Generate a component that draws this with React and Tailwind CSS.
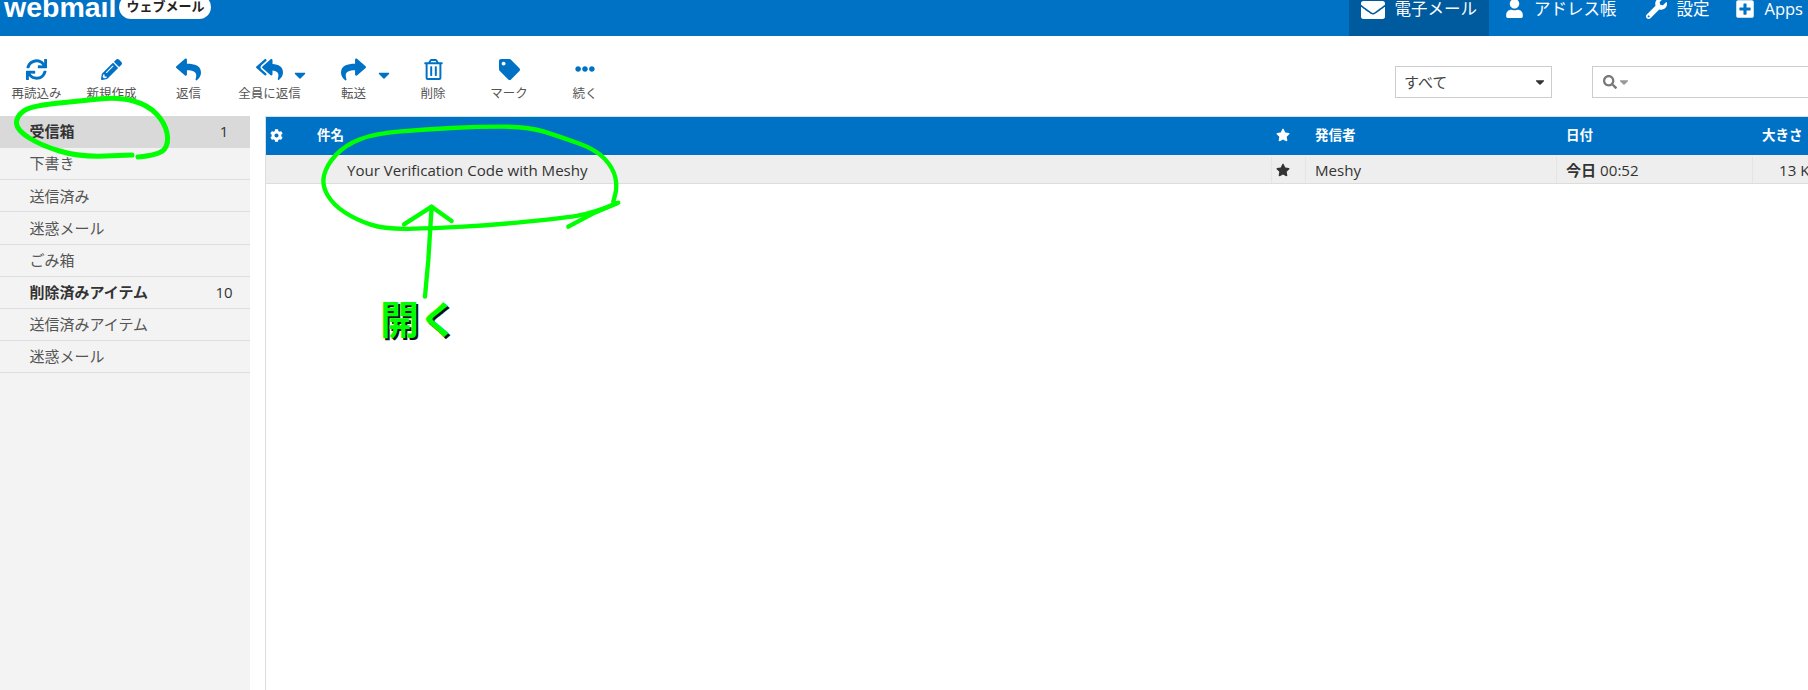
import {
  FaSync, FaPencilAlt, FaReply, FaReplyAll, FaShare, FaRegTrashAlt, FaTag, FaEllipsisH,
  FaEnvelope, FaUser, FaWrench, FaPlusSquare, FaCog, FaStar, FaSearch, FaCaretDown,
} from 'react-icons/fa';

const font = "font-['Open_Sans','Noto_Sans_CJK_JP',sans-serif]";

const tools = [
  { label: '再読込み', icon: <FaSync size={21} />, w: 'w-[73px]' },
  { label: '新規作成', icon: <FaPencilAlt size={21} />, w: 'w-[77px]' },
  { label: '返信', icon: <FaReply size={25} />, w: 'w-[77px]' },
  { label: '全員に返信', icon: <FaReplyAll size={27} />, w: 'w-[85px]', caret: true },
  { label: '転送', icon: <FaShare size={25} />, w: 'w-[83px]', caret: true },
  { label: '削除', icon: <FaRegTrashAlt size={21} />, w: 'w-[76px]' },
  { label: 'マーク', icon: <FaTag size={21} />, w: 'w-[76px]' },
  { label: '続く', icon: <FaEllipsisH size={20} />, w: 'w-[76px]' },
];

const folders = [
  { name: '受信箱', count: '1', bold: true, active: true },
  { name: '下書き' },
  { name: '送信済み' },
  { name: '迷惑メール' },
  { name: 'ごみ箱' },
  { name: '削除済みアイテム', count: '10', bold: true },
  { name: '送信済みアイテム' },
  { name: '迷惑メール' },
];

// turns hand-drawn points into a smooth stroke
function smooth(pts) {
  let d = `M${pts[0][0]} ${pts[0][1]}`;
  for (let i = 1; i < pts.length - 1; i++) {
    const mx = (pts[i][0] + pts[i + 1][0]) / 2;
    const my = (pts[i][1] + pts[i + 1][1]) / 2;
    d += ` Q${pts[i][0]} ${pts[i][1]} ${mx} ${my}`;
  }
  const last = pts[pts.length - 1];
  return d + ` L${last[0]} ${last[1]}`;
}

function Annotations() {
  const green = { fill: 'none', stroke: '#00ff00', strokeLinecap: 'round', strokeLinejoin: 'round' };
  return (
    <svg className="absolute left-0 top-0 pointer-events-none" width="1808" height="690">
      <g {...green} strokeWidth="5">
        <path d={smooth([[138, 157], [160, 155], [169, 143], [165, 123], [148, 105], [119, 97], [79, 101], [30, 106], [16, 117], [17, 130], [40, 145], [79, 157], [132, 155]])} />
      </g>
      <g transform="translate(260 110) scale(0.3333)" {...green} strokeWidth="13">
        <path d={smooth([[1070, 280], [1000, 310], [900, 325], [700, 345], [520, 355], [375, 358], [290, 330], [220, 285], [185, 225], [200, 165], [255, 105], [345, 70], [500, 58], [650, 50], [805, 50], [900, 80], [1010, 120], [1060, 175], [1072, 230], [1060, 275]])} />
        <path d="M925 350 L1000 310 L1075 278" />
        <path d="M495 560 L505 450 L515 290" />
        <path d="M432 343 L515 290 L575 333" />
      </g>
    </svg>
  );
}

function NavItem({ icon, label, active, className }) {
  return (
    <div className={`flex h-9 items-start gap-2.5 pt-px text-[16.5px] leading-4 text-white ${active ? 'bg-[#005a9e] px-3' : ''} ${className || ''}`}>
      {icon}
      <span>{label}</span>
    </div>
  );
}

export default function App() {
  return (
    <div className={`relative h-[690px] w-[1808px] overflow-hidden bg-white text-[#333] ${font}`}>
      <header className="flex h-9 items-start overflow-hidden bg-[#0072c6]">
        <div className="ml-1 flex items-start">
          <span className="-mt-[7px] font-['Liberation_Sans',sans-serif] text-[28.5px] font-bold leading-7 text-white">webmail</span>
          <span className="-mt-[5px] ml-[3px] flex h-6 w-[92px] items-center justify-center rounded-full bg-white text-[13px] font-bold text-[#222]">ウェブメール</span>
        </div>
        <div className="ml-auto flex items-start">
          <NavItem active icon={<FaEnvelope size={24} className="-mt-[3px]" />} label="電子メール" />
          <NavItem className="ml-[16px]" icon={<FaUser size={19} className="-mt-[2px]" />} label="アドレス帳" />
          <NavItem className="ml-[29px]" icon={<FaWrench size={21} className="-mt-[3px]" />} label="設定" />
          <NavItem className="ml-[25px] mr-[5px]" icon={<FaPlusSquare size={20} className="-mt-[2px]" />} label="Apps" />
        </div>
      </header>

      <div className="flex h-20 items-start">
        <div className="flex pt-[21px]">
          {tools.map((t) => (
            <div key={t.label} className={`relative flex flex-col items-center ${t.w}`}>
              <div className="flex h-[24px] items-center text-[#0072c6]">{t.icon}</div>
              <span className="mt-[5px] text-[12.5px] leading-4 text-[#555]">{t.label}</span>
              {t.caret && <FaCaretDown size={18} className="absolute left-1/2 top-[9px] ml-[21px] text-[#0072c6]" />}
            </div>
          ))}
        </div>
        <div className="ml-auto mt-[30px] flex items-start">
          <div className="flex h-8 w-[157px] items-center justify-between border border-[#ccc] pl-2 pr-1 text-[15px] text-[#444]">
            <span>すべて</span>
            <FaCaretDown size={14} className="text-[#333]" />
          </div>
          <div className="ml-10 flex h-8 w-[216px] items-center border border-r-0 border-[#ccc] pl-[10px] text-[#777]">
            <FaSearch size={14} />
            <FaCaretDown size={14} className="text-[#999]" />
          </div>
        </div>
      </div>

      <div className="flex h-[574px]">
        <aside className="w-[250px] shrink-0 bg-[#f3f3f3]">
          {folders.map((f, i) => (
            <div key={i} className={`flex h-[32.15px] items-center border-b pl-[29.5px] text-[15px] ${f.active ? 'border-transparent bg-[#d9d9d9]' : 'border-[#ddd]'} ${f.bold ? 'font-bold' : 'text-[#555]'}`}>
              <span>{f.name}</span>
              {f.count && <span className="ml-auto mr-[10px] w-8 text-center text-[15px] font-medium">{f.count}</span>}
            </div>
          ))}
        </aside>

        <main className="ml-[15px] flex-1 border-l border-[#ddd]">
          <div className="grid h-[39px] grid-cols-[40px_965px_35px_250px_196px_100px] items-center border-t border-[#cfe3f3] bg-[#0072c6] pb-[2px] text-[13.5px] font-bold text-white">
            <div className="pl-[4px]"><FaCog size={13} /></div>
            <div className="pl-[11px]">件名</div>
            <div className="flex justify-center pr-[11px]"><FaStar size={14} /></div>
            <div className="pl-[9px]">発信者</div>
            <div className="pl-[10px]">日付</div>
            <div className="pl-[10px]">大きさ</div>
          </div>
          <div className="grid h-[29px] grid-cols-[40px_965px_35px_250px_196px_100px] border-b border-[#ddd] bg-[#eee] pt-[2px] text-[15.1px] font-medium">
            <div />
            <div className="flex items-center pl-[41px]">Your Verification Code with Meshy</div>
            <div className="flex items-center justify-center border-x border-[#e4e4e4] pr-[11px]"><FaStar size={14} /></div>
            <div className="flex items-center pl-[9px]">Meshy</div>
            <div className="flex items-center border-l border-[#e4e4e4] pl-[9px]"><b>今日</b>&nbsp;00:52</div>
            <div className="flex items-center border-l border-[#e4e4e4] pl-[26px]">13 KB</div>
          </div>
        </main>
      </div>

      <Annotations />
      <span className="absolute left-[380px] top-[299px] text-[39px] font-bold leading-10 text-[#00ff00] [text-shadow:2px_2px_0_#111]">開く</span>
    </div>
  );
}
